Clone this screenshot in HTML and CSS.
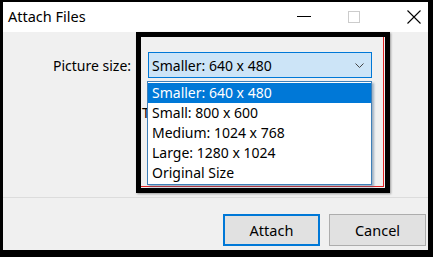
FILE: index.html
```html
<!DOCTYPE html>
<html>
<head>
<meta charset="utf-8">
<link rel="stylesheet" href="styles.css">
</head>
<body>
<div class="window">
  <div class="titlebar">
    <div class="title">Attach Files</div>
    <div class="controls">
      <span class="ctl min"><svg width="14" height="2" viewBox="0 0 14 2"><rect width="14" height="1" fill="#000"/></svg></span>
      <span class="ctl max"><svg width="12" height="12" viewBox="0 0 12 12"><rect x="0.5" y="0.5" width="11" height="11" fill="none" stroke="#cccccc"/></svg></span>
      <span class="ctl close"><svg width="14" height="14" viewBox="0 0 14 14"><path d="M0.5 0.5 L13.5 13.5 M13.5 0.5 L0.5 13.5" stroke="#000" stroke-width="1.1"/></svg></span>
    </div>
  </div>
  <div class="content">
    <div class="main">
      <div class="row">
        <span class="label">Picture size:</span>
        <div class="combo">
          <span>Smaller: 640 x 480</span>
          <svg class="chev" width="9" height="5" viewBox="0 0 9 5"><path d="M0.5 0.5 L4.5 4.5 L8.5 0.5" fill="none" stroke="#444" stroke-width="1"/></svg>
        </div>
      </div>
    </div>
    <div class="footer">
      <button class="btn primary">Attach</button>
      <button class="btn">Cancel</button>
    </div>
  </div>
  <div class="annot"></div>
  <div class="peek">To</div>
  <ul class="list">
    <li class="sel">Smaller: 640 x 480</li>
    <li>Small: 800 x 600</li>
    <li>Medium: 1024 x 768</li>
    <li>Large: 1280 x 1024</li>
    <li>Original Size</li>
  </ul>
</div>
</body>
</html>
```

FILE: styles.css
```css
html, body { margin: 0; padding: 0; }
body {
  background: #000;
  width: 433px;
  height: 257px;
  box-sizing: border-box;
  padding: 2px 5px 7px 3px;
  font-family: "Noto Sans", "Open Sans", sans-serif;
  font-size: 14px;
  color: #000;
  overflow: hidden;
}
.window {
  position: relative;
  width: 425px;
  height: 248px;
  display: flex;
  flex-direction: column;
  background: #f0f0f0;
}
.titlebar {
  height: 30px;
  background: #fff;
  display: flex;
  align-items: center;
  justify-content: space-between;
  flex: none;
}
.title {
  padding-left: 5px;
  font-size: 14.5px;
  margin-top: -2px;
}
.controls { display: flex; align-items: center; height: 100%; }
.ctl { display: flex; align-items: center; justify-content: center; }
.min { width: 14px; margin-right: 37px; }
.max { width: 12px; margin-right: 47px; }
.close { width: 14px; margin-right: 7px; }
.ctl svg { display: block; }
.content {
  flex: 1;
  display: flex;
  flex-direction: column;
}
.main {
  height: 166px;
  border-bottom: 1px solid #dcdcdc;
  flex: none;
  box-sizing: border-box;
}
.row {
  display: flex;
  align-items: center;
  padding-top: 20px;
  padding-left: 50px;
}
.label { width: 95px; }
.combo {
  width: 212px;
  height: 24px;
  border: 1px solid #0078d7;
  background: #cce4f7;
  display: flex;
  align-items: center;
  justify-content: space-between;
  padding: 0 7px 0 3px;
}
.chev { display: block; }
.footer {
  flex: 1;
  display: flex;
  justify-content: flex-end;
  align-items: flex-start;
  padding-top: 16px;
  gap: 9px;
  padding-right: 2px;
}
.btn {
  width: 97px;
  height: 32px;
  background: #e1e1e1;
  border: 1px solid #adadad;
  font-family: inherit;
  font-size: 14.5px;
  color: #000;
  padding: 0;
  margin: 0;
}
.btn.primary { border: 2px solid #0078d7; }
.annot {
  position: absolute;
  left: 133px;
  top: 30px;
  width: 244px;
  height: 151px;
  border: 5px solid #000;
  box-shadow: inset -1px -1px 0 0 #f0f0f0, inset -2px -2px 0 0 #e02020, 1px 1px 2px rgba(0,0,0,0.35);
  pointer-events: none;
}
.peek {
  position: absolute;
  left: 139px;
  top: 101px;
  font-size: 14px;
  line-height: 20px;
}
.list {
  position: absolute;
  left: 144px;
  top: 79px;
  width: 223px;
  margin: 0;
  padding: 1px 0;
  list-style: none;
  background: #fff;
  border: 1px solid #3f7fb8;
  box-shadow: 2px 2px 2px rgba(60,100,140,0.45);
}
.list li {
  height: 20px;
  line-height: 20px;
  padding-left: 4px;
}
.list li.sel { background: #0078d7; color: #fff; }
```
